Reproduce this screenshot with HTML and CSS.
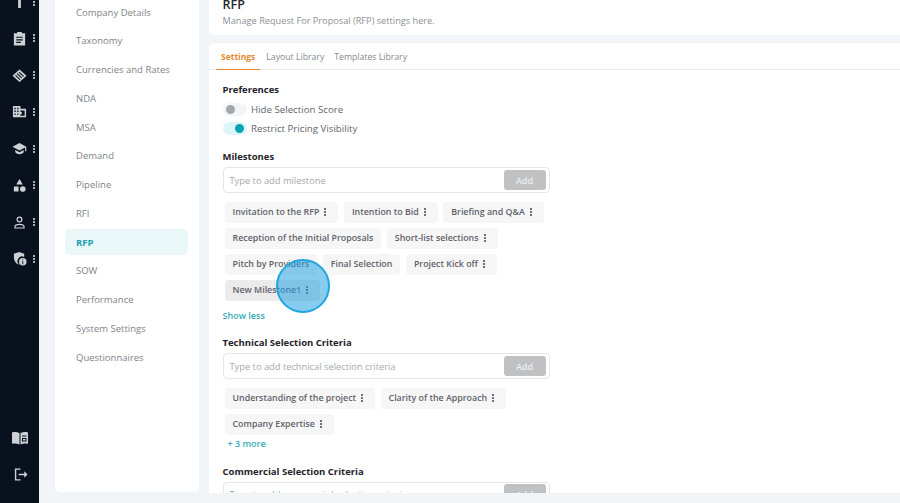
FILE: index.html
```html
<!DOCTYPE html>
<html lang="en">
<head>
<meta charset="utf-8">
<title>RFP Settings</title>
<link rel="stylesheet" href="styles.css">
</head>
<body>
<div class="app">
  <aside class="rail">
    <div class="rail-top">
      <div class="rail-item"><svg class="ic" viewBox="0 0 16 16"><path d="M4 1h8v3H9.500v11h-3V4H4z"/></svg><span class="kebab light"><i></i><i></i><i></i></span></div>
      <div class="rail-item"><svg class="ic" viewBox="0 0 16 16"><path fill-rule="evenodd" d="M5.500 1h5v1.500h3.500V15.500H2V2.500h3.500zM4.500 6v1.300h7V6zm0 2.800v1.300h7V8.800zM4.500 11.500v1.300h5v-1.300z"/></svg><span class="kebab light"><i></i><i></i><i></i></span></div>
      <div class="rail-item"><svg class="ic" viewBox="0 0 16 16"><path fill-rule="evenodd" d="M8 1.500 15.500 8.300 8 15 .5 8.300zM5 6.500l5 4.500.8-.8-5-4.500zM7 4.700l5 4.500.8-.8-5-4.500zM3.300 8.200l5 4.500.8-.8-5-4.500z"/></svg><span class="kebab light"><i></i><i></i><i></i></span></div>
      <div class="rail-item"><svg class="ic" viewBox="0 0 16 16"><path fill-rule="evenodd" d="M1 2h8v3h6v9H1zM2.500 4v1.500H4V4zm3 0v1.500H7V4zm-3 3v1.500H4V7zm3 0v1.500H7V7zm-3 3v1.500H4V10zm3 0v1.500H7V10zM9 7v1.500h1.500V11H9v1.500h4.500V7z"/></svg><span class="kebab light"><i></i><i></i><i></i></span></div>
      <div class="rail-item"><svg class="ic" viewBox="0 0 16 16"><path d="M8 2 .5 6 8 10l6-3.200V11h1.200V6zM3.500 9.500V12c1 1.300 2.800 2 4.500 2s3.500-.7 4.500-2V9.500L8 12z"/></svg><span class="kebab light"><i></i><i></i><i></i></span></div>
      <div class="rail-item"><svg class="ic" viewBox="0 0 16 16"><path d="M8 1l3.500 6h-7zM2 9h5v5.500H2z"/><circle cx="11.500" cy="11.700" r="3"/></svg><span class="kebab light"><i></i><i></i><i></i></span></div>
      <div class="rail-item"><svg class="ic" viewBox="0 0 16 16"><path fill-rule="evenodd" d="M8 1.500a3.200 3.200 0 1 1 0 6.400 3.200 3.200 0 0 1 0-6.400zm0 1.300a1.900 1.900 0 1 0 0 3.800 1.900 1.900 0 0 0 0-3.800zM2.500 14.500v-2c0-2 2-3.200 5.500-3.200s5.500 1.200 5.500 3.200v2zm1.300-1.300h8.400v-.7c0-1-1.600-1.900-4.200-1.900s-4.200.9-4.200 1.900z"/></svg><span class="kebab light"><i></i><i></i><i></i></span></div>
      <div class="rail-item"><svg class="ic" viewBox="0 0 16 16"><path fill-rule="evenodd" d="M7.500 1 13 3v3.500a4.800 4.800 0 0 0-5.500 7.800l-.5.200C4 13.300 2 10.500 2 7V3z"/><path fill-rule="evenodd" d="M11.500 7.500a4 4 0 1 1 0 8 4 4 0 0 1 0-8zM11 9v1h1V9zm0 2v3h1v-3z"/></svg><span class="kebab light"><i></i><i></i><i></i></span></div>
    </div>
    <div class="rail-bottom">
      <svg class="ic ic-wide" viewBox="0 0 16 14"><path fill-rule="evenodd" d="M0 1.500c2.500-.8 5-.6 7.500.6V13.500C5 12.300 2.500 12.100 0 12.800zM8.500 2.100C11 .9 13.500.7 16 1.500v11.300c-2.500-.7-5-.5-7.500.7zM10 4.500v1h4.500v-1zM10 7v3.500h4.500V7zm1 1h2.500v1.500H11z"/></svg>
      <svg class="ic" viewBox="0 0 16 16"><path d="M2 1.500h6v1.500H3.500v10H8v1.500H2z"/><path d="M6 7.200h6V4.500L15.500 8 12 11.500V8.800H6z"/></svg>
    </div>
  </aside>

  <nav class="side">
    <a class="side-link">Company Details</a>
    <a class="side-link">Taxonomy</a>
    <a class="side-link">Currencies and Rates</a>
    <a class="side-link">NDA</a>
    <a class="side-link">MSA</a>
    <a class="side-link">Demand</a>
    <a class="side-link">Pipeline</a>
    <a class="side-link">RFI</a>
    <a class="side-link active">RFP</a>
    <a class="side-link">SOW</a>
    <a class="side-link">Performance</a>
    <a class="side-link">System Settings</a>
    <a class="side-link">Questionnaires</a>
  </nav>

  <main class="main">
    <header class="head">
      <h1>RFP</h1>
      <p>Manage Request For Proposal (RFP) settings here.</p>
    </header>
    <section class="panel">
      <div class="tabs">
        <a class="tab on">Settings</a>
        <a class="tab">Layout Library</a>
        <a class="tab">Templates Library</a>
      </div>
      <div class="body">
        <h2 class="sec first">Preferences</h2>
        <div class="toggles">
          <div class="toggle-row"><span class="toggle"><b></b></span>Hide Selection Score</div>
          <div class="toggle-row"><span class="toggle on"><b></b></span>Restrict Pricing Visibility</div>
        </div>

        <h2 class="sec gap-a">Milestones</h2>
        <div class="field"><span>Type to add milestone</span><button class="add">Add</button></div>
        <div class="chips">
          <div class="chip-row">
            <span class="chip">Invitation to the RFP<span class="kebab"><i></i><i></i><i></i></span></span>
            <span class="chip">Intention to Bid<span class="kebab"><i></i><i></i><i></i></span></span>
            <span class="chip">Briefing and Q&amp;A<span class="kebab"><i></i><i></i><i></i></span></span>
          </div>
          <div class="chip-row">
            <span class="chip">Reception of the Initial Proposals</span>
            <span class="chip">Short-list selections<span class="kebab"><i></i><i></i><i></i></span></span>
          </div>
          <div class="chip-row">
            <span class="chip">Pitch by Providers</span>
            <span class="chip">Final Selection</span>
            <span class="chip">Project Kick off<span class="kebab"><i></i><i></i><i></i></span></span>
          </div>
          <div class="chip-row">
            <span class="chip hover">New Milestone1<span class="kebab"><i></i><i></i><i></i></span></span>
          </div>
        </div>
        <a class="more">Show less</a>

        <h2 class="sec gap-b">Technical Selection Criteria</h2>
        <div class="field"><span>Type to add technical selection criteria</span><button class="add">Add</button></div>
        <div class="chips">
          <div class="chip-row">
            <span class="chip">Understanding of the project<span class="kebab"><i></i><i></i><i></i></span></span>
            <span class="chip">Clarity of the Approach<span class="kebab"><i></i><i></i><i></i></span></span>
          </div>
          <div class="chip-row">
            <span class="chip">Company Expertise<span class="kebab"><i></i><i></i><i></i></span></span>
          </div>
        </div>
        <a class="more plus">+ 3 more</a>

        <h2 class="sec gap-c">Commercial Selection Criteria</h2>
        <div class="field"><span>Type to add commercial selection criteria</span><button class="add">Add</button></div>
      </div>
    </section>
  </main>
</div>
<div class="pointer"></div>
</body>
</html>
```

FILE: styles.css
```css
* { box-sizing: border-box; }
html, body { margin: 0; height: 100%; overflow: hidden; }
body {
  background: #f1f5f8;
  font-family: "Open Sans", "Noto Sans", sans-serif;
  font-size: 10px;
  color: #6d7178;
}
.app { display: flex; height: 503px; }

.rail {
  width: 40px;
  flex: none;
  background: #0a111e;
  border-right: 1px solid #f4f7f9;
  display: flex;
  flex-direction: column;
  justify-content: space-between;
  height: 503px;
  padding-bottom: 21px;
  overflow: hidden;
}
.rail-top { display: flex; flex-direction: column; gap: 21.750px; margin-top: -6px; }
.rail-item { display: flex; align-items: center; justify-content: center; gap: 6px; height: 15px; padding-left: 8px; }
.rail-bottom { display: flex; flex-direction: column; align-items: center; gap: 22px; padding-left: 1px; }
.ic { width: 15px; height: 15px; fill: #cdd0d5; display: block; }
.ic-wide { width: 16px; height: 14px; }

.kebab { display: inline-flex; flex-direction: column; gap: 1px; margin-left: 5px; margin-right: 4px; vertical-align: middle; }
.kebab i { display: block; width: 2px; height: 2px; border-radius: 50%; background: #3f4349; }
.kebab.light { margin: 0; }
.kebab.light i { background: #e3e5e8; }

.side {
  width: 144px;
  flex: none;
  margin-left: 15px;
  height: 492px;
  background: #fff;
  border-radius: 0 0 5px 5px;
  display: flex;
  flex-direction: column;
  padding: 0 11px 0 10px;
}
.side-link {
  display: flex;
  align-items: center;
  height: 26px;
  margin-bottom: 2.750px;
  padding-left: 11px;
  color: #7f8389;
  font-size: 9.500px;
  border-radius: 5px;
  position: relative;
  top: -1px;
}
.side-link.active { background: #e9f7f9; color: #1c9fb0; font-weight: 700; }

.main { flex: 1; min-width: 0; margin-left: 10px; display: flex; flex-direction: column; height: 493px; gap: 8px; }
.head { height: 35px; flex: none; background: #fff; border-radius: 0 0 0 5px; padding-left: 13.500px; overflow: hidden; }
.head h1 { margin: -4px 0 0; font-size: 12.500px; line-height: 17px; font-weight: 600; color: #24272c; }
.head p { margin: 1px 0 0; font-size: 9.200px; line-height: 13px; color: #8c9096; }

.panel { flex: 1; min-height: 0; background: #fff; border-radius: 5px 0 0 0; overflow: hidden; }
.tabs { display: flex; height: 27px; border-bottom: 1px solid #e8e9ea; padding-left: 7px; }
.tab { display: flex; align-items: center; height: 27px; padding: 0 3.500px; margin-right: 3px; font-size: 8.700px; color: #85898f; }
.tab.on { color: #e58a2e; font-weight: 700; border-bottom: 1px solid #e58a2e; padding: 0 5px; margin-right: 2.500px; font-size: 8.500px; }

.body { padding: 0 13.500px; }
.sec { margin: 0; font-size: 9.500px; line-height: 13px; font-weight: 700; color: #1f2329; }
.first { margin-top: 13px; }
.toggles { margin-top: 3.500px; }
.gap-a { margin-top: 12.500px; }
.gap-b { margin-top: 14.500px; }
.gap-c { margin-top: 15px; }

.toggle-row { display: flex; align-items: center; gap: 4.500px; height: 19px; font-size: 9.700px; color: #62666c; }
.toggle { width: 24px; height: 13px; border-radius: 7px; background: #f1f5f8; position: relative; flex: none; }
.toggle b { position: absolute; left: 3px; top: 2px; width: 9px; height: 9px; border-radius: 50%; background: #a3a6aa; }
.toggle.on { background: #dff5f8; }
.toggle.on b { left: 12px; background: #0aa5b5; }

.field {
  width: 327px;
  height: 26px;
  margin-top: 4px;
  border: 1px solid #e5e6e8;
  border-radius: 4px;
  padding: 2px 3px 2px 6px;
  display: flex;
  align-items: center;
  justify-content: space-between;
  font-size: 9.300px;
  color: #a6a9ad;
}
.add {
  width: 42px;
  height: 20.500px;
  border: 0;
  border-radius: 3px;
  background: #bfc1c3;
  color: #eceded;
  font: 600 9px "Open Sans", sans-serif;
  padding: 0;
}

.chips { display: flex; flex-direction: column; gap: 5.500px; margin-top: 9px; padding-left: 2px; }
.chip-row { display: flex; gap: 5.500px; }
.chip {
  display: inline-flex;
  align-items: center;
  height: 20.500px;
  padding: 0 8px;
  background: #f6f6f7;
  border-radius: 4px;
  font-size: 8.850px;
  font-weight: 600;
  color: #5f6369;
  white-space: nowrap;
}
.chip.hover { background: #ebebec; }

.more { display: block; margin-top: 8px; font-size: 9px; line-height: 13px; font-weight: 600; color: #35adb4; }
.more.plus { margin-top: 2px; padding-left: 5px; }

.pointer {
  position: absolute;
  left: 276px;
  top: 259px;
  width: 54px;
  height: 54px;
  border-radius: 50%;
  background: rgba(36, 163, 226, 0.55);
  border: 2px solid #1fa5e0;
}
```
